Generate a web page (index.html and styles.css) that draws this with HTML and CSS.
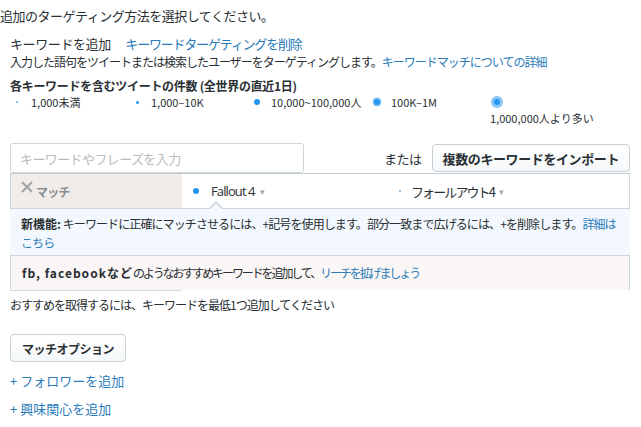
FILE: index.html
```html
<!DOCTYPE html>
<html lang="ja">
<head>
    <meta charset="UTF-8">
    <meta name="viewport" content="width=device-width, initial-scale=1.0">
    <title>キーワードターゲティング</title>
    <link rel="stylesheet" href="styles.css">
</head>
<body>
    <p class="title">追加のターゲティング方法を選択してください。</p>
    <div class="panel">
        <div class="head">
            <span class="head-label">キーワードを追加</span>
            <a class="link head-link" href="#">キーワードターゲティングを削除</a>
        </div>
        <p class="desc">入力した語句をツイートまたは検索したユーザーをターゲティングします。<a class="link" href="#">キーワードマッチについての詳細</a></p>
        <h4 class="vol-title">各キーワードを含むツイートの件数 (全世界の直近1日)</h4>
        <ul class="legend">
            <li class="legend-item"><span class="dot-box"><span class="dot dot-1"></span></span>1,000未満</li>
            <li class="legend-item"><span class="dot-box"><span class="dot dot-2"></span></span>1,000–10K</li>
            <li class="legend-item"><span class="dot-box"><span class="dot dot-3"></span></span>10,000~100,000人</li>
            <li class="legend-item"><span class="dot-box"><span class="dot dot-4"></span></span>100K–1M</li>
            <li class="legend-item legend-last"><span class="dot-box"><span class="dot dot-5"></span></span><span class="legend-label">1,000,000人より多い</span></li>
        </ul>

        <div class="entry">
            <input class="kw-input" type="text" placeholder="キーワードやフレーズを入力">
            <div class="import">
                <span class="or">または</span>
                <button class="btn btn-import">複数のキーワードをインポート</button>
            </div>
        </div>

        <div class="tabs">
            <div class="tab-match">
                <svg class="x-icon" width="12" height="12" viewBox="0 0 12 12"><path d="M1 1L11 11M11 1L1 11" stroke="#a3a3a3" stroke-width="2" fill="none"/></svg>
                <span>マッチ</span>
            </div>
            <div class="tab tab-active"><span class="dot-box"><span class="dot dot-3s"></span></span><span class="tab-text">Fallout 4</span><span class="caret">▾</span></div>
            <div class="tab tab-jp"><span class="dot-box"><span class="dot dot-1"></span></span><span class="tab-text">フォールアウト4</span><span class="caret">▾</span></div>
        </div>

        <div class="info">
            <b>新機能:</b> キーワードに正確にマッチさせるには、+記号を使用します。部分一致まで広げるには、+を削除します。<a class="link" href="#">詳細はこちら</a>
        </div>
        <div class="suggest">
            <b>fb, facebookなど</b>のようなおすすめキーワードを追加して、<a class="link" href="#">リーチを拡げましょう</a>
        </div>

        <p class="note">おすすめを取得するには、キーワードを最低1つ追加してください</p>

        <button class="btn btn-options">マッチオプション</button>

        <a class="link add" href="#">+ フォロワーを追加</a>
        <a class="link add" href="#">+ 興味関心を追加</a>
    </div>
</body>
</html>
```

FILE: styles.css
```css
body {
    margin: 0;
    font-family: "Noto Sans CJK JP", "Noto Sans", sans-serif;
    color: #292f33;
    background-color: #ffffff;
}
.link {
    color: #2b7bb9;
    text-decoration: none;
}
.title {
    margin: 6px 0 0 0;
    font-size: 13px;
    line-height: 20px;
    letter-spacing: -0.5px;
}
.panel {
    padding: 0 11px 0 10px;
}
.head {
    margin-top: 9px;
    font-size: 13px;
    line-height: 18px;
    letter-spacing: -0.4px;
}
.head-link {
    margin-left: 12px;
    letter-spacing: -1.2px;
}
.desc {
    margin: 0;
    font-size: 12px;
    line-height: 17px;
    letter-spacing: -1px;
}
.vol-title {
    margin: 7px 0 0 0;
    font-size: 12px;
    line-height: 17px;
    letter-spacing: -0.3px;
}
.legend {
    list-style: none;
    margin: 0;
    padding: 0;
    display: flex;
    align-items: flex-start;
    font-size: 11px;
    line-height: 16px;
}
.legend-item {
    width: 120px;
    display: flex;
    align-items: center;
}
.legend-last {
    flex-direction: column;
    align-items: flex-start;
}
.dot-box {
    width: 14px;
    height: 16px;
    display: inline-flex;
    align-items: center;
    justify-content: center;
    margin-right: 7px;
}
.dot {
    display: block;
    border-radius: 50%;
    background-color: #2196f3;
}
.dot-1 {
    width: 2px;
    height: 2px;
    background-color: #6fb6ef;
}
.dot-2 {
    width: 3px;
    height: 3px;
}
.dot-3, .dot-3s {
    width: 6px;
    height: 6px;
}
.dot-4 {
    width: 6px;
    height: 6px;
    box-shadow: 0 0 0 1.5px #8cc6f4;
}
.dot-5 {
    width: 6px;
    height: 6px;
    box-shadow: 0 0 0 3px #8cc6f4;
}
.entry {
    margin-top: 17px;
    display: flex;
    justify-content: space-between;
    align-items: center;
}
.kw-input {
    width: 294px;
    height: 30px;
    box-sizing: border-box;
    border: 1px solid #ccd6dd;
    border-radius: 3px;
    padding: 0 9px;
    font-family: inherit;
    font-size: 13px;
    letter-spacing: -0.6px;
    color: #292f33;
}
.kw-input::placeholder {
    color: #b8bcbf;
}
.import {
    display: flex;
    align-items: center;
    gap: 10px;
}
.or {
    font-size: 13px;
    letter-spacing: -0.5px;
}
.btn {
    font-family: inherit;
    font-weight: bold;
    color: #292f33;
    background: linear-gradient(#ffffff, #f5f8fa);
    border: 1px solid #c9d0d4;
    border-radius: 4px;
    cursor: pointer;
}
.btn-import {
    height: 28px;
    padding: 0 10px;
    font-size: 13px;
    letter-spacing: -0.4px;
}
.tabs {
    display: flex;
    height: 34px;
    border: 1px solid #ccd6dd;
    border-top-color: #c4cbcf;
}
.tab-match {
    width: 171px;
    box-sizing: border-box;
    background-color: #f0ecea;
    display: flex;
    align-items: center;
    padding-left: 10px;
    font-size: 12px;
    font-weight: bold;
    color: #8a8f93;
    letter-spacing: -0.8px;
}
.x-icon {
    margin: -8px 3px 0 0;
}
.tab {
    width: 204px;
    box-sizing: border-box;
    display: flex;
    align-items: center;
    padding-left: 7px;
    font-family: "Open Sans", "Noto Sans CJK JP", sans-serif;
    font-size: 13px;
}
.tab .dot-box {
    margin-right: 8px;
}
.tab-active .tab-text {
    letter-spacing: -0.9px;
}
.tab-jp .dot-box {
    margin-right: 4px;
}
.tab-jp .tab-text {
    font-family: "Noto Sans CJK JP", sans-serif;
    letter-spacing: -1.9px;
}
.caret {
    margin-left: 5px;
    font-size: 9px;
    color: #a3a9ad;
}
.info {
    position: relative;
    padding: 5px 11px 3px 11px;
    background-color: #f2f8fd;
    border-bottom: 1px solid #ccd6dd;
    font-size: 12px;
    line-height: 19px;
    letter-spacing: -0.9px;
}
.info b {
    letter-spacing: 0;
}
.info::before,
.info::after {
    content: "";
    position: absolute;
    left: 199px;
    border-left: 7px solid transparent;
    border-right: 7px solid transparent;
}
.info::before {
    top: -8px;
    border-bottom: 7px solid #ccd6dd;
}
.info::after {
    top: -6px;
    border-bottom: 7px solid #f2f8fd;
}
.suggest {
    position: relative;
    padding: 8px 11px 8px 11px;
    background-color: #faf6f5;
    border-left: 1px solid #d6d9db;
    border-right: 1px solid #ccd6dd;
    font-size: 12px;
    line-height: 18px;
    letter-spacing: -2.1px;
}
.suggest b {
    letter-spacing: 1px;
}
.suggest::after {
    content: "";
    position: absolute;
    left: -1px;
    bottom: -1px;
    width: 171px;
    border-bottom: 1px solid #d6d9db;
}
.note {
    margin: 6px 0 0 0;
    font-size: 12px;
    line-height: 17px;
    letter-spacing: -1px;
}
.btn-options {
    display: block;
    margin-top: 21px;
    height: 28px;
    padding: 0 11px;
    font-size: 12px;
    letter-spacing: -0.5px;
}
.add {
    display: block;
    font-size: 13px;
    line-height: 18px;
}
.btn-options + .add {
    margin-top: 10px;
}
.add + .add {
    margin-top: 10px;
}
```
